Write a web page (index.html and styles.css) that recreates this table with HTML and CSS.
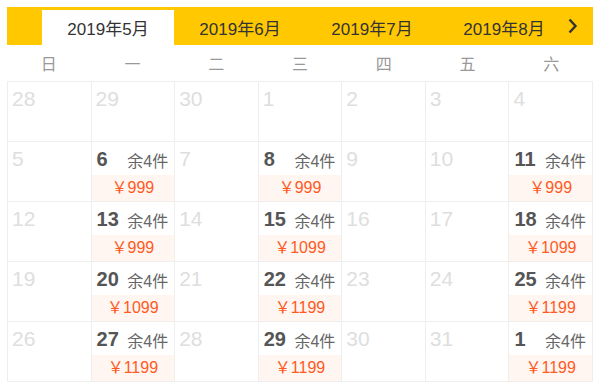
FILE: index.html
```html
<!DOCTYPE html>
<html lang="zh">
<head>
<meta charset="utf-8">
<link rel="stylesheet" href="styles.css">
</head>
<body>
<div class="cal">
  <div class="tabs">
    <div class="tab active">2019年5月</div>
    <div class="tab">2019年6月</div>
    <div class="tab">2019年7月</div>
    <div class="tab">2019年8月</div>
    <svg class="next" width="12" height="18" viewBox="0 0 12 18"><path d="M2.5 2.5 L8.5 9 L2.5 15.5" fill="none" stroke="#333" stroke-width="2.4"/></svg>
  </div>
  <div class="week">
    <div>日</div><div>一</div><div>二</div><div>三</div><div>四</div><div>五</div><div>六</div>
  </div>
  <div class="grid">
    <div class="cell off"><span class="d">28</span></div>
    <div class="cell off"><span class="d">29</span></div>
    <div class="cell off"><span class="d">30</span></div>
    <div class="cell off"><span class="d">1</span></div>
    <div class="cell off"><span class="d">2</span></div>
    <div class="cell off"><span class="d">3</span></div>
    <div class="cell off"><span class="d">4</span></div>

    <div class="cell off"><span class="d">5</span></div>
    <div class="cell on"><div class="top"><span class="d">6</span><span class="s">余4件</span></div><div class="p">￥999</div></div>
    <div class="cell off"><span class="d">7</span></div>
    <div class="cell on"><div class="top"><span class="d">8</span><span class="s">余4件</span></div><div class="p">￥999</div></div>
    <div class="cell off"><span class="d">9</span></div>
    <div class="cell off"><span class="d">10</span></div>
    <div class="cell on"><div class="top"><span class="d">11</span><span class="s">余4件</span></div><div class="p">￥999</div></div>

    <div class="cell off"><span class="d">12</span></div>
    <div class="cell on"><div class="top"><span class="d">13</span><span class="s">余4件</span></div><div class="p">￥999</div></div>
    <div class="cell off"><span class="d">14</span></div>
    <div class="cell on"><div class="top"><span class="d">15</span><span class="s">余4件</span></div><div class="p">￥1099</div></div>
    <div class="cell off"><span class="d">16</span></div>
    <div class="cell off"><span class="d">17</span></div>
    <div class="cell on"><div class="top"><span class="d">18</span><span class="s">余4件</span></div><div class="p">￥1099</div></div>

    <div class="cell off"><span class="d">19</span></div>
    <div class="cell on"><div class="top"><span class="d">20</span><span class="s">余4件</span></div><div class="p">￥1099</div></div>
    <div class="cell off"><span class="d">21</span></div>
    <div class="cell on"><div class="top"><span class="d">22</span><span class="s">余4件</span></div><div class="p">￥1199</div></div>
    <div class="cell off"><span class="d">23</span></div>
    <div class="cell off"><span class="d">24</span></div>
    <div class="cell on"><div class="top"><span class="d">25</span><span class="s">余4件</span></div><div class="p">￥1199</div></div>

    <div class="cell off"><span class="d">26</span></div>
    <div class="cell on"><div class="top"><span class="d">27</span><span class="s">余4件</span></div><div class="p">￥1199</div></div>
    <div class="cell off"><span class="d">28</span></div>
    <div class="cell on"><div class="top"><span class="d">29</span><span class="s">余4件</span></div><div class="p">￥1199</div></div>
    <div class="cell off"><span class="d">30</span></div>
    <div class="cell off"><span class="d">31</span></div>
    <div class="cell on"><div class="top"><span class="d">1</span><span class="s">余4件</span></div><div class="p">￥1199</div></div>
  </div>
</div>
</body>
</html>
```
FILE: styles.css
```css
html, body { margin: 0; padding: 0; background: #fff; }
body {
  padding: 7px;
  font-family: "Liberation Sans", "Noto Sans CJK SC", sans-serif;
}
.cal { width: 586px; }
.tabs {
  position: relative;
  display: flex;
  height: 35px;
  padding: 3px 0 0 35px;
  background: #ffc800;
}
.tab {
  width: 132px;
  height: 35px;
  line-height: 40px;
  text-align: center;
  font-size: 17px;
  color: #333;
}
.tab.active { background: #fff; }
.next {
  position: absolute;
  right: 14px;
  top: 10px;
}
.week {
  display: grid;
  grid-template-columns: repeat(7, 1fr);
  height: 36px;
  line-height: 39px;
  text-align: center;
  font-size: 16px;
  color: #999;
}
.grid {
  display: grid;
  grid-template-columns: repeat(7, 1fr);
  grid-auto-rows: 60px;
  border-top: 1px solid #eee;
  border-left: 1px solid #eee;
}
.cell {
  border-right: 1px solid #eee;
  border-bottom: 1px solid #eee;
  display: flex;
  flex-direction: column;
  min-width: 0;
}
.off .d {
  font-size: 21px;
  color: #dedede;
  padding: 4px 0 0 4px;
  line-height: 26px;
}
.top {
  height: 33px;
  display: flex;
  align-items: center;
  justify-content: space-between;
  padding: 2px 6px 0 5px;
  box-sizing: border-box;
}
.on .d {
  font-size: 20px;
  font-weight: bold;
  color: #555;
}
.s {
  font-size: 16px;
  color: #666;
}
.p {
  flex: 1;
  background: #fff6f2;
  color: #ff5a24;
  font-size: 16px;
  text-align: center;
  line-height: 26px;
}
```
